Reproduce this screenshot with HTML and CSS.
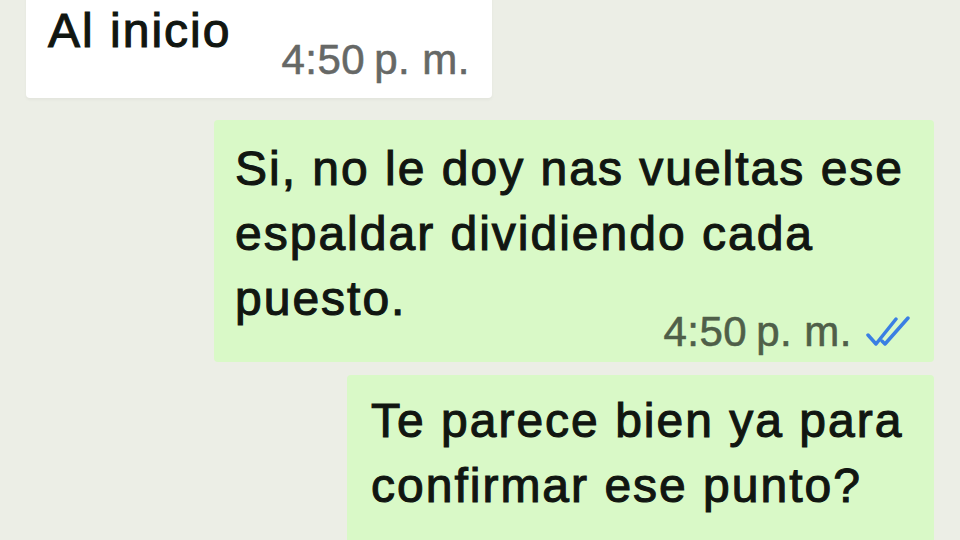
FILE: index.html
```html
<!DOCTYPE html>
<html lang="es">
  <head>
    <meta charset="UTF-8" />
    <meta name="viewport" content="width=device-width, initial-scale=1.0" />
    <title>Chat</title>
    <link rel="stylesheet" href="styles.css">
  </head>
  <body>
    <main class="chat">
      <!-- mensaje recibido -->
      <div class="msg msg--in">
        <p class="msg-text">Al inicio</p>
        <div class="msg-meta">
          <span class="msg-time">4:50&#8239;p. m.</span>
        </div>
      </div>

      <!-- mensajes enviados -->
      <div class="msg msg--out msg--wide">
        <p class="msg-text">Si, no le doy nas vueltas ese<br>espaldar dividiendo cada<br>puesto.</p>
        <div class="msg-meta">
          <span class="msg-time">4:50&#8239;p. m.</span>
          <svg class="ticks" viewBox="0 0 46 32" width="46" height="32">
            <polyline points="2,19 10,28 30,3" />
            <polyline points="16,25 19,28 42,2" />
          </svg>
        </div>
      </div>

      <div class="msg msg--out msg--narrow msg--below">
        <p class="msg-text">Te parece bien ya para<br>confirmar ese punto?</p>
        <div class="msg-meta">
          <span class="msg-time">4:50&#8239;p. m.</span>
          <svg class="ticks" viewBox="0 0 46 32" width="46" height="32">
            <polyline points="2,19 10,28 30,3" />
            <polyline points="16,25 19,28 42,2" />
          </svg>
        </div>
      </div>
    </main>
  </body>
</html>
```

FILE: styles.css
```css
* {
  box-sizing: border-box;
  margin: 0;
  padding: 0;
}

html,
body {
  width: 100%;
  height: 100%;
  overflow: hidden;
}

body {
  font-family: "Liberation Sans", Arial, sans-serif;
  background: #eceee6;
  color: #111611;
}

.chat {
  display: flex;
  flex-direction: column;
  padding: 0 26px;
  margin-top: -14px;
}

.msg {
  display: flex;
}

.msg-text {
  font-size: 48px;
  line-height: 65px;
  letter-spacing: 2px;
  -webkit-text-stroke: 1.1px currentColor;
}

.msg-time {
  font-size: 42px;
  line-height: 40px;
  letter-spacing: 0.5px;
  -webkit-text-stroke: 0.6px currentColor;
}

/* burbuja blanca (recibido) */
.msg--in {
  align-self: flex-start;
  width: 466px;
  justify-content: space-between;
  align-items: flex-start;
  padding: 12px 22px 18px 22px;
  background: #ffffff;
  border-radius: 0 0 4px 4px;
  box-shadow: 0 2px 3px rgba(0, 0, 0, 0.04);
}

.msg--in .msg-meta {
  margin-top: 42px;
}

.msg--in .msg-time {
  color: #666866;
}

/* burbujas verdes (enviado) */
.msg--out {
  align-self: flex-end;
  flex-direction: column;
  padding: 16px 22px 10px 21px;
  background: #d9f9c7;
  border-radius: 4px;
}

.msg--wide {
  width: 720px;
  margin-top: 22px;
}

.msg--narrow {
  width: 587px;
  margin-top: 13px;
  padding-top: 13px;
  padding-left: 24px;
}

.msg--out .msg-meta {
  align-self: flex-end;
  display: flex;
  align-items: center;
  gap: 14px;
  margin-top: -19px;
}

.msg--below .msg-meta {
  margin-top: 18px;
}

.msg--out .msg-time {
  color: #4f5f49;
}

.ticks {
  fill: none;
  stroke: #3a7fe3;
  stroke-width: 3.5;
  stroke-linecap: round;
  stroke-linejoin: round;
}
```
